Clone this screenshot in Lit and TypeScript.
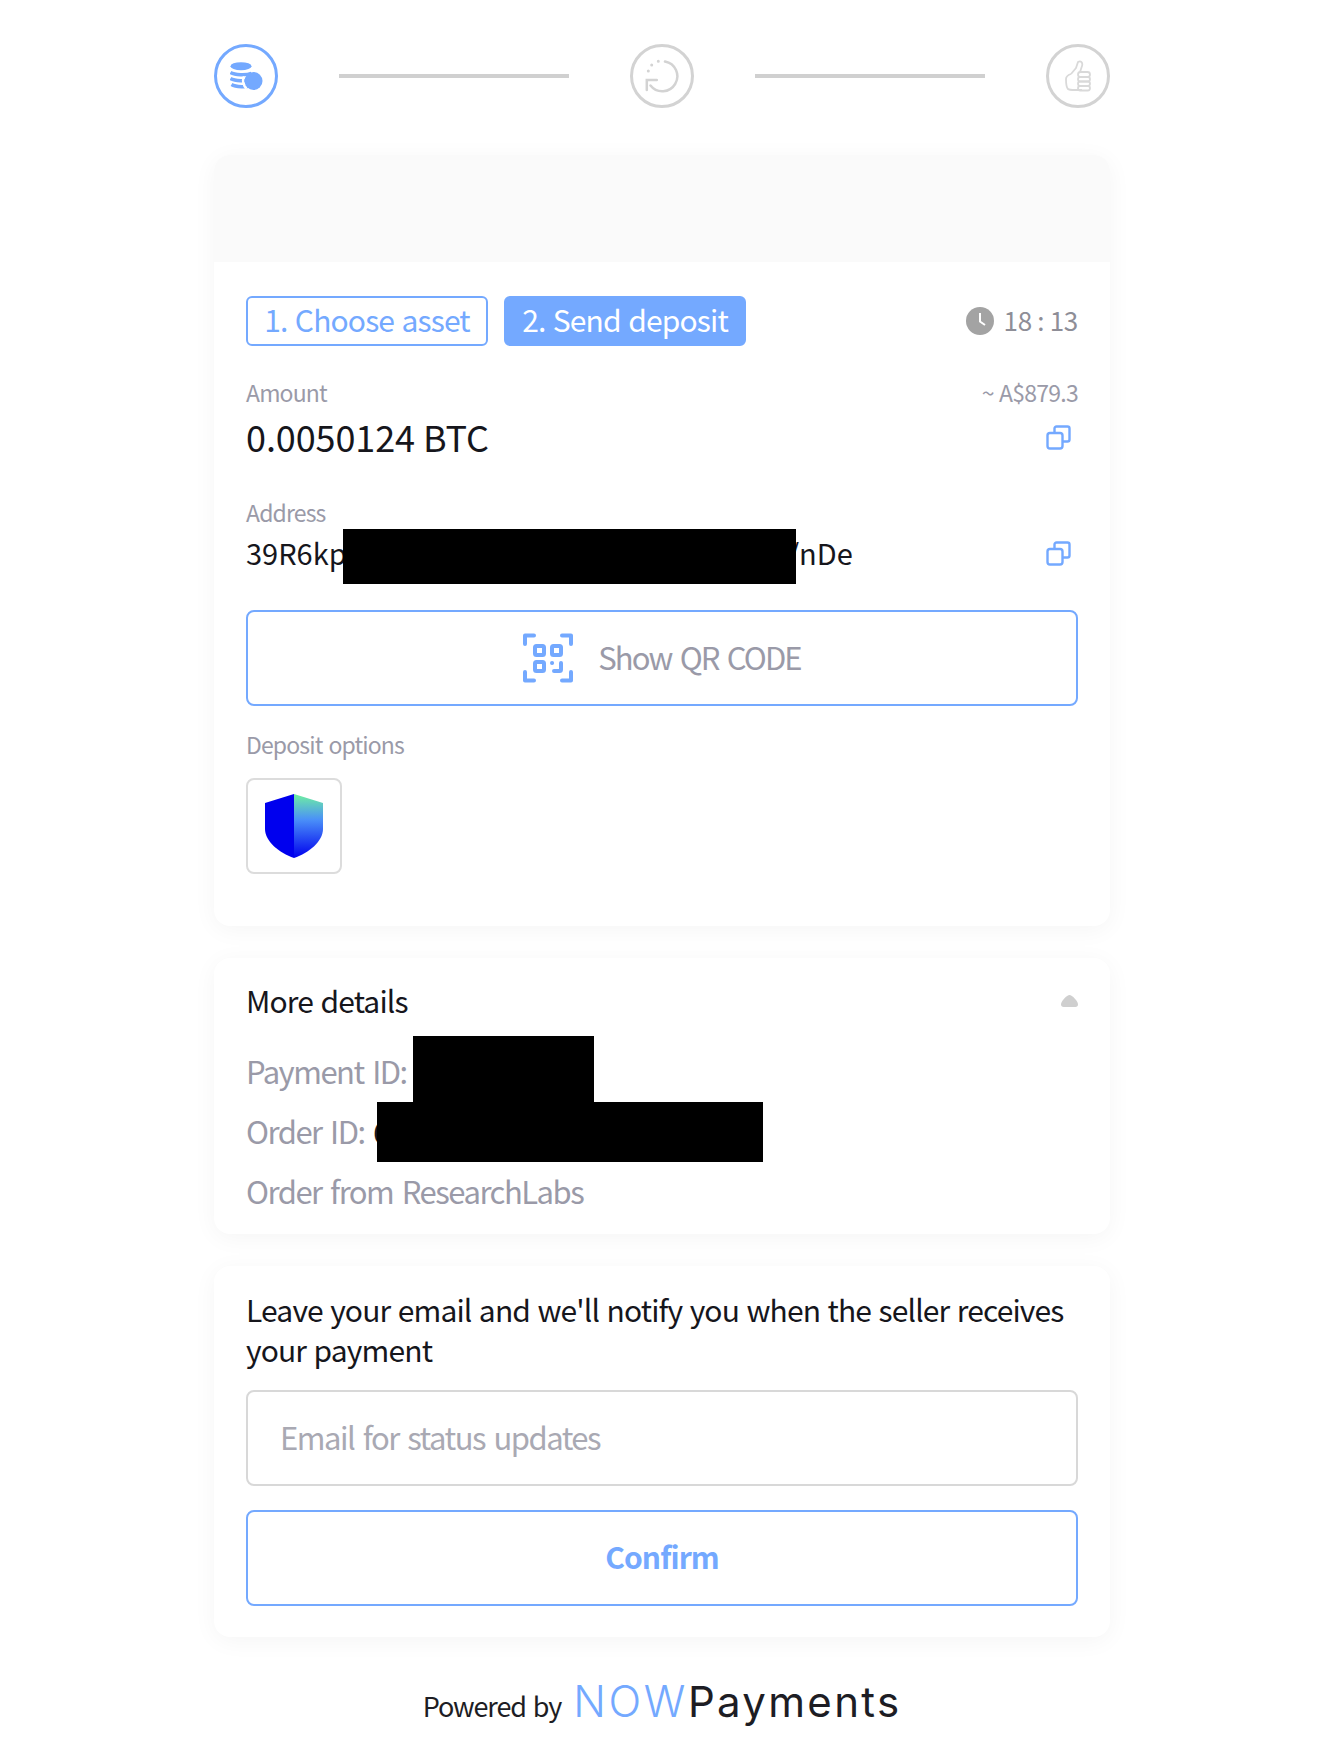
import { LitElement, html, css } from "lit";
import { customElement } from "lit/decorators.js";

const copyIcon = html`<svg class="copy" viewBox="0 0 25 25" fill="none" stroke="#74a9ff" stroke-width="2.4">
  <rect x="1.5" y="8" width="15" height="15.5" rx="2.5"/>
  <path d="M8.5 8V3.5a2 2 0 0 1 2-2h11a2 2 0 0 1 2 2v11a2 2 0 0 1-2 2h-5"/>
</svg>`;

@customElement("app-root")
export class AppRoot extends LitElement {
  static styles = css`
    :host { display: block; background: #fff; min-height: 1758px; font-family: "Noto Sans CJK JP", "Noto Sans", sans-serif; color: #16161c; }
    .page { width: 896px; margin: 0 auto; padding-top: 44px; display: flex; flex-direction: column; }
    .stepper { display: flex; align-items: center; justify-content: space-between; height: 64px; margin-bottom: 47px; }
    .circle { width: 64px; height: 64px; box-sizing: border-box; border-radius: 50%; border: 3.5px solid #d3d3d3; display: flex; align-items: center; justify-content: center; flex: none; }
    .circle.on { border-color: #74a9ff; }
    .line { width: 230px; height: 4px; background: #d0d0d0; }
    .card { background: #fff; border-radius: 16px; box-shadow: 0 4px 24px rgba(0,0,0,.045); margin-bottom: 32px; }
    .head { height: 107px; background: #fafafa; border-radius: 16px 16px 0 0; }
    .body { padding: 34px 32px 52px; }
    .tabs { display: flex; align-items: center; gap: 16px; height: 50px; }
    .tab { height: 50px; box-sizing: border-box; width: 242px; border: 2px solid #74a9ff; border-radius: 6px; color: #74a9ff; font-size: 30px; letter-spacing: -0.85px; word-spacing: 1.5px; padding-bottom: 4px; display: flex; align-items: center; justify-content: center; }
    .tab.on { background: #74a9ff; color: #fff; }
    .timer { margin-left: auto; display: flex; align-items: center; gap: 10px; color: #8e8e97; font-size: 26px; letter-spacing: -0.3px; word-spacing: 0; }
    .timer span { padding-bottom: 4px; }
    .row { display: flex; justify-content: space-between; align-items: center; }
    .label { color: #9a9aa8; font-size: 23px; line-height: 34px; letter-spacing: -0.85px; word-spacing: 1.5px; }
    .fiat { color: #9a9aa8; font-size: 23px; line-height: 34px; letter-spacing: -0.75px; word-spacing: 1px; }
    .amountHead { margin-top: 29px; }
    .valueRow { margin-top: 2px; }
    .amount { font-size: 36px; line-height: 50px; letter-spacing: -0.1px; }
    .copy { width: 25px; height: 25px; margin-right: 7px; margin-top: 2px; display: block; }
    .addrLabel { margin-top: 34px; }
    .addr { position: relative; font-size: 29px; line-height: 44px; margin-top: 1px; height: 44px; }
    .mask { position: absolute; background: #000; }
    .spacer { display: inline-block; width: 441px; }
    .addrMask { left: 97px; width: 453px; top: -1px; height: 55px; }
    .qr { margin-top: 36px; height: 96px; box-sizing: border-box; border: 2px solid #74a9ff; border-radius: 8px; display: flex; align-items: center; justify-content: center; gap: 25px; color: #9a9aa8; font-size: 31px; letter-spacing: -1.85px; word-spacing: 3px; }
    .qr span, .input span, .confirm span { padding-bottom: 4px; }
    .optLabel { margin-top: 21px; }
    .opt { margin-top: 17px; width: 96px; height: 96px; box-sizing: border-box; border: 2px solid #dcdcdc; border-radius: 8px; display: flex; align-items: center; justify-content: center; }
    .more { padding: 22px 32px 0; height: 276px; box-sizing: border-box; position: relative; }
    .title { font-size: 30px; line-height: 40px; letter-spacing: -0.85px; word-spacing: 1.5px; }
    .caret { width: 17px; height: 12px; margin-top: 2px; }
    .info { color: #9a9aa8; font-size: 31px; line-height: 60px; position: relative; letter-spacing: -1.5px; word-spacing: 3px; }
    .info b { font-weight: 400; color: #16161c; }
    .infos { margin-top: 21px; position: relative; }
    .maskPay { left: 167px; width: 181px; top: -5px; height: 66px; }
    .maskOrder { left: 131px; width: 386px; top: 61px; height: 60px; }
    .email { padding: 23px 32px 31px; }
    .notice { font-size: 30px; line-height: 40px; letter-spacing: -0.85px; word-spacing: 1.5px; }
    .input { margin-top: 21px; height: 96px; box-sizing: border-box; border: 2px solid #d8d8d8; border-radius: 8px; display: flex; align-items: center; padding-left: 32px; color: #a9a9b3; font-size: 31px; letter-spacing: -1.5px; word-spacing: 3px; }
    .confirm { margin-top: 24px; height: 96px; box-sizing: border-box; border: 2px solid #74a9ff; border-radius: 8px; display: flex; align-items: center; justify-content: center; color: #74a9ff; font-size: 30px; font-weight: 700; letter-spacing: -0.9px; }
    .footer { display: flex; justify-content: center; align-items: baseline; gap: 12px; font-size: 27px; margin-top: 8px; color: #1d1d24; letter-spacing: -1.1px; word-spacing: 2px; }
    .logo { font-family: Inter, sans-serif; font-size: 42px; line-height: 48px; letter-spacing: 0; }
    .logo .now { color: #74a9ff; font-weight: 300; font-size: 43px; letter-spacing: 2.6px; }
    .logo .pay { font-weight: 400; letter-spacing: 2.3px; }
  `;

  render() {
    return html`<div class="page">
      <div class="stepper">
        <div class="circle on">
          <svg width="33" height="29" viewBox="0 0 33 29" fill="none">
            <ellipse cx="11" cy="4.200" rx="10.500" ry="4" fill="#74a9ff"/>
            <g stroke="#74a9ff" stroke-width="3.400">
              <path d="M.5 10.500c4 2.600 16 3 21 .8"/>
              <path d="M.5 16.500c4 2.600 16 3 21 .8"/>
              <path d="M1.500 22.500c4 2.600 16 3 21 .8"/>
            </g>
            <circle cx="23.500" cy="19" r="9" fill="#74a9ff"/>
            <path d="M14 14.500a10.500 10.500 0 0 0 2.500 12" stroke="#fff" stroke-width="2.400"/>
          </svg>
        </div>
        <div class="line"></div>
        <div class="circle">
          <svg width="34" height="34" viewBox="0 0 34 34" fill="none" stroke="#d3d3d3" stroke-width="2.500" stroke-linecap="round">
            <path d="M20 2.500A15 15 0 1 1 5.500 26.500"/>
            <path d="M1.800 31V21h10"/>
            <path d="M13.300 2.200h.01M6.700 6h.01M3.300 12h.01" stroke-width="3"/>
          </svg>
        </div>
        <div class="line"></div>
        <div class="circle">
          <svg width="28" height="32" viewBox="0 0 28 32" fill="none" stroke="#d9d9d9" stroke-width="1.800" stroke-linejoin="round">
            <path d="M7 14l5-6 2-6c3-2 5 1 4 4l-2 6"/>
            <path d="M7 14c-3 1-5 2-5 5 0 4 0 8 2 10 1 1 4 1 7 1h7"/>
            <rect x="14" y="12" width="12" height="5" rx="2.500"/>
            <rect x="14" y="17" width="12" height="4.500" rx="2.200"/>
            <rect x="14" y="21.500" width="12" height="4.500" rx="2.200"/>
            <rect x="14" y="26" width="12" height="4.500" rx="2.200"/>
          </svg>
        </div>
      </div>

      <div class="card">
        <div class="head"></div>
        <div class="body">
          <div class="tabs">
            <div class="tab">1. Choose asset</div>
            <div class="tab on">2. Send deposit</div>
            <div class="timer">
              <svg width="28" height="28" viewBox="0 0 28 28"><circle cx="14" cy="14" r="14" fill="#a3a3a3"/><path d="M14 6v8.500l5 3.500" stroke="#fff" stroke-width="2" fill="none"/></svg>
              <span>18 : 13</span>
            </div>
          </div>
          <div class="row amountHead"><span class="label">Amount</span><span class="fiat">~ A$879.3</span></div>
          <div class="row valueRow"><span class="amount">0.0050124 BTC</span>${copyIcon}</div>
          <div class="label addrLabel">Address</div>
          <div class="row addr"><span>39R6kp<span class="spacer"></span>/nDe</span>${copyIcon}
            <div class="mask addrMask"></div>
          </div>
          <div class="qr">
            <svg width="50" height="50" viewBox="0 0 50 50" fill="none" stroke="#74a9ff" stroke-width="4" stroke-linecap="round" stroke-linejoin="round">
              <path d="M2 11V2.500h9M39 2.500h9V11M2 39v8.500h9M39 47.500h9V39"/>
              <rect x="12" y="13" width="9" height="9" rx="1.500"/>
              <rect x="29" y="13" width="9" height="9" rx="1.500"/>
              <rect x="12" y="29" width="9" height="9" rx="1.500"/>
              <path d="M38 30v6.500a1.500 1.500 0 0 1-1.500 1.500H31M29 30h.1"/>
            </svg>
            <span>Show QR CODE</span>
          </div>
          <div class="label optLabel">Deposit options</div>
          <div class="opt">
            <svg width="58" height="64" viewBox="0 0 58 64">
              <defs><linearGradient id="g" x1="0" y1="0" x2="0" y2="1"><stop offset="0" stop-color="#6ff0a0"/><stop offset=".4" stop-color="#4a90f8"/><stop offset="1" stop-color="#0000ee"/></linearGradient></defs>
              <path d="M29 0L0 9v26c0 12 14 24 29 29z" fill="#0000ee"/>
              <path d="M29 0l29 9v26c0 12-14 24-29 29z" fill="url(#g)"/>
            </svg>
          </div>
        </div>
      </div>

      <div class="card more">
        <div class="row"><span class="title">More details</span>
          <svg class="caret" viewBox="0 0 17 12"><path d="M8.500 0c2.500 0 8.500 6 8.500 9.500 0 1.500-1 2.500-2.500 2.500h-12C1 12 0 11 0 9.500 0 6 6 0 8.500 0z" fill="#cfcfcf"/></svg>
        </div>
        <div class="infos">
          <div class="info">Payment ID:</div>
          <div class="info">Order ID: <b>6</b></div>
          <div class="info">Order from ResearchLabs</div>
          <div class="mask maskPay"></div>
          <div class="mask maskOrder"></div>
        </div>
      </div>

      <div class="card email">
        <div class="notice">Leave your email and we'll notify you when the seller receives your payment</div>
        <div class="input"><span>Email for status updates</span></div>
        <div class="confirm"><span>Confirm</span></div>
      </div>

      <div class="footer">
        <span>Powered by</span>
        <span class="logo"><span class="now">NOW</span><span class="pay">Payments</span></span>
      </div>
    </div>`;
  }
}
